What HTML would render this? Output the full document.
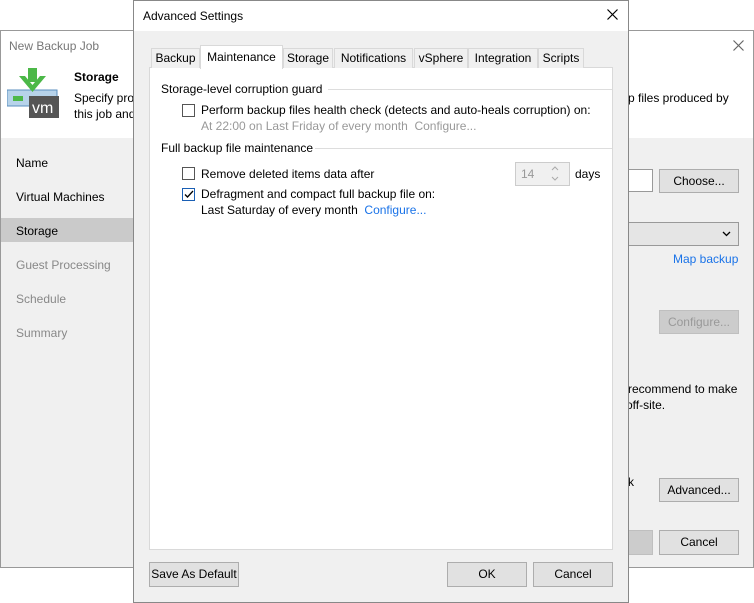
<!DOCTYPE html>
<html><head><style>
*{box-sizing:border-box;margin:0;padding:0}
body{width:754px;height:603px;background:#fff;font-family:"Liberation Sans",sans-serif;font-size:12px;color:#000;position:relative;overflow:hidden}
.a{position:absolute;white-space:nowrap}
.btn{position:absolute;background:#e1e1e1;border:1px solid #adadad;text-align:center;line-height:22px;font-size:12px}
.cb{position:absolute;width:13px;height:13px;border:1px solid #333;background:#fff}
.tab{position:absolute;top:48px;height:20px;border:1px solid #d9d9d9;border-bottom:none;background:#f0f0f0;line-height:19px;text-align:center}
</style></head><body>
<div class="a" style="left:0;top:30px;width:754px;height:538px;border:1px solid #999;background:#f0f0f0"></div>
<div class="a" style="left:1px;top:31px;width:752px;height:107px;background:#fff"></div>
<div class="a" style="left:9px;top:39px;color:#777">New Backup Job</div>
<svg class="a" style="left:733px;top:40px" width="11" height="11"><path d="M0.5 0.5L10.5 10.5M10.5 0.5L0.5 10.5" stroke="#666" stroke-width="1.2"/></svg>
<svg class="a" style="left:7px;top:68px" width="54" height="52">
<rect x="0" y="22" width="50" height="16" fill="#b7d3ea" stroke="#5b8fbf"/>
<rect x="6" y="28" width="10" height="5" fill="#4cb848"/>
<rect x="22" y="28" width="30" height="22" fill="#555"/>
<text x="25" y="45" fill="#fff" font-size="16" font-family="Liberation Sans">vm</text>
<rect x="21" y="0" width="9" height="14" fill="#4cb848"/>
<path d="M12 8 L25.5 24 L39 8 L33 8 L25.5 17 L18 8Z" fill="#4cb848"/>
</svg>
<div class="a" style="left:74px;top:70px;font-weight:bold">Storage</div>
<div class="a" style="left:74px;top:91px">Specify pro</div>
<div class="a" style="left:74px;top:107px">this job and</div>
<div class="a" style="left:16px;top:156px">Name</div>
<div class="a" style="left:16px;top:190px">Virtual Machines</div>
<div class="a" style="left:1px;top:218px;width:132px;height:24px;background:#cacaca"></div>
<div class="a" style="left:16px;top:224px">Storage</div>
<div class="a" style="left:16px;top:258px;color:#888">Guest Processing</div>
<div class="a" style="left:16px;top:292px;color:#888">Schedule</div>
<div class="a" style="left:16px;top:326px;color:#888">Summary</div>
<div class="a" style="left:628px;top:91px">p files produced by</div>
<div class="a" style="left:620px;top:169px;width:33px;height:23px;background:#fff;border:1px solid #999"></div>
<div class="btn" style="left:659px;top:169px;width:80px;height:24px">Choose...</div>
<div class="a" style="left:620px;top:222px;width:119px;height:24px;background:#e5e5e5;border:1px solid #999"></div>
<svg class="a" style="left:722px;top:231px" width="9" height="6"><path d="M1 1L4.5 4.5L8 1" stroke="#000" stroke-width="1.3" fill="none"/></svg>
<div class="a" style="left:673px;top:252px;color:#1a73e8">Map backup</div>
<div class="btn" style="left:659px;top:310px;width:80px;height:24px;color:#999;background:#ccc;border-color:#bfbfbf">Configure...</div>
<div class="a" style="left:628px;top:382px">recommend to make</div>
<div class="a" style="left:626px;top:398px">off-site.</div>
<div class="a" style="left:628px;top:475px">k</div>
<div class="btn" style="left:659px;top:478px;width:80px;height:24px">Advanced...</div>
<div class="a" style="left:620px;top:530px;width:33px;height:25px;background:#ccc;border:1px solid #bfbfbf"></div>
<div class="btn" style="left:659px;top:530px;width:80px;height:25px">Cancel</div>
<div class="a" style="left:133px;top:0;width:496px;height:603px;border:1px solid #888;background:#f0f0f0"></div>
<div class="a" style="left:134px;top:1px;width:494px;height:30px;background:#fff"></div>
<div class="a" style="left:143px;top:9px">Advanced Settings</div>
<svg class="a" style="left:607px;top:9px" width="11" height="11"><path d="M0.5 0.5L10.5 10.5M10.5 0.5L0.5 10.5" stroke="#000" stroke-width="1.2"/></svg>
<div class="a" style="left:149px;top:67px;width:464px;height:483px;background:#fff;border:1px solid #d9d9d9"></div>
<div class="tab" style="left:151px;width:49px">Backup</div>
<div class="tab" style="left:200px;top:45px;height:24px;width:83px;background:#fff;line-height:22px">Maintenance</div>
<div class="tab" style="left:283px;width:50px">Storage</div>
<div class="tab" style="left:334px;width:79px">Notifications</div>
<div class="tab" style="left:414px;width:54px">vSphere</div>
<div class="tab" style="left:468px;width:70px">Integration</div>
<div class="tab" style="left:538px;width:46px">Scripts</div>
<div class="a" style="left:161px;top:82px">Storage-level corruption guard</div>
<div class="a" style="left:328px;top:89px;width:284px;height:1px;background:#ddd"></div>
<div class="cb" style="left:182px;top:104px;border-color:#555"></div>
<div class="a" style="left:201px;top:103px">Perform backup files health check (detects and auto-heals corruption) on:</div>
<div class="a" style="left:201px;top:119px;color:#999">At 22:00 on Last Friday of every month&nbsp; Configure...</div>
<div class="a" style="left:161px;top:141px">Full backup file maintenance</div>
<div class="a" style="left:315px;top:148px;width:297px;height:1px;background:#ddd"></div>
<div class="cb" style="left:182px;top:167px;border-color:#555"></div>
<div class="a" style="left:201px;top:167px">Remove deleted items data after</div>
<div class="a" style="left:515px;top:162px;width:55px;height:24px;background:#f0f0f0;border:1px solid #ccc"></div>
<div class="a" style="left:521px;top:167px;color:#999">14</div>
<svg class="a" style="left:551px;top:166px" width="8" height="16"><path d="M1 4L4 1L7 4M1 11L4 14L7 11" stroke="#aaa" fill="none"/></svg>
<div class="a" style="left:575px;top:167px">days</div>
<div class="cb" style="left:182px;top:188px;border-color:#1a5fb4"></div>
<svg class="a" style="left:184px;top:190px" width="10" height="9"><path d="M1 4.5L3.5 7L9 1" stroke="#000" stroke-width="1.3" fill="none"/></svg>
<div class="a" style="left:201px;top:187px">Defragment and compact full backup file on:</div>
<div class="a" style="left:201px;top:203px">Last Saturday of every month&nbsp; <span style="color:#1a73e8">Configure...</span></div>
<div class="btn" style="left:149px;top:562px;width:90px;height:25px">Save As Default</div>
<div class="btn" style="left:447px;top:562px;width:80px;height:25px">OK</div>
<div class="btn" style="left:533px;top:562px;width:80px;height:25px">Cancel</div>
</body></html>
